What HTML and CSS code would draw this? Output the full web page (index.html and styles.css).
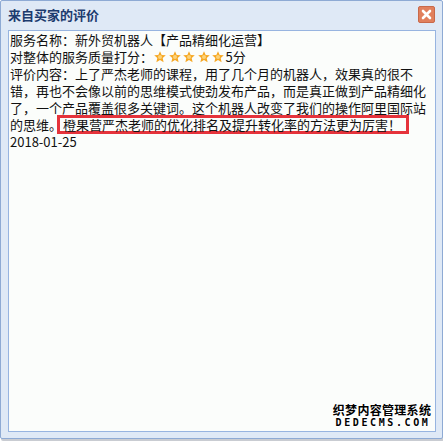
FILE: index.html
```html
<!DOCTYPE html>
<html lang="zh">
<head>
<meta charset="utf-8">
<title>来自买家的评价</title>
<link rel="stylesheet" href="styles.css">
</head>
<body>
<div class="window">
  <div class="titlebar">
    <span class="title">来自买家的评价</span>
    <span class="close">
      <svg width="17" height="17" viewBox="0 0 17 17"><rect x="0.5" y="0.5" width="16" height="16" rx="1.5" fill="#e1805d" stroke="#c8694a"/><path d="M5 5 L12 12 M12 5 L5 12" stroke="#fff" stroke-width="2.6" stroke-linecap="round"/></svg>
    </span>
  </div>
  <div class="panel">
    <div class="line">服务名称：新外贸机器人【产品精细化运营】</div>
    <div class="line">对整体的服务质量打分：<span class="stars"><svg class="star" viewBox="0 0 14 14"><path d="M7 1.2 L8.7 5 L12.8 5.3 L9.7 8 L10.6 12.2 L7 10 L3.4 12.2 L4.3 8 L1.2 5.3 L5.3 5 Z" fill="#f6a825"/><circle cx="7" cy="7" r="2" fill="#fbd27a"/></svg><svg class="star" viewBox="0 0 14 14"><path d="M7 1.2 L8.7 5 L12.8 5.3 L9.7 8 L10.6 12.2 L7 10 L3.4 12.2 L4.3 8 L1.2 5.3 L5.3 5 Z" fill="#f6a825"/><circle cx="7" cy="7" r="2" fill="#fbd27a"/></svg><svg class="star" viewBox="0 0 14 14"><path d="M7 1.2 L8.7 5 L12.8 5.3 L9.7 8 L10.6 12.2 L7 10 L3.4 12.2 L4.3 8 L1.2 5.3 L5.3 5 Z" fill="#f6a825"/><circle cx="7" cy="7" r="2" fill="#fbd27a"/></svg><svg class="star" viewBox="0 0 14 14"><path d="M7 1.2 L8.7 5 L12.8 5.3 L9.7 8 L10.6 12.2 L7 10 L3.4 12.2 L4.3 8 L1.2 5.3 L5.3 5 Z" fill="#f6a825"/><circle cx="7" cy="7" r="2" fill="#fbd27a"/></svg><svg class="star" viewBox="0 0 14 14"><path d="M7 1.2 L8.7 5 L12.8 5.3 L9.7 8 L10.6 12.2 L7 10 L3.4 12.2 L4.3 8 L1.2 5.3 L5.3 5 Z" fill="#f6a825"/><circle cx="7" cy="7" r="2" fill="#fbd27a"/></svg></span>5分</div>
    <div class="line">评价内容：上了严杰老师的课程，用了几个月的机器人，效果真的很不</div>
    <div class="line">错，再也不会像以前的思维模式使劲发布产品，而是真正做到产品精细化</div>
    <div class="line">了，一个产品覆盖很多关键词。这个机器人改变了我们的操作阿里国际站</div>
    <div class="line">的思维。<span class="mark">橙果营严杰老师的优化排名及提升转化率的方法更为厉害！</span></div>
    <div class="line">2018-01-25</div>
  </div>
  <div class="watermark">
    <div class="wm-cn">织梦内容管理系统</div>
    <div class="wm-en">DEDECMS.COM</div>
  </div>
</div>
</body>
</html>
```
FILE: styles.css
```css
html, body {
  margin: 0;
  padding: 0;
  background: #ffffff;
}
body {
  width: 443px;
  height: 441px;
  overflow: hidden;
  font-family: "Noto Sans CJK SC", "Noto Sans", sans-serif;
}
.window {
  position: relative;
  box-sizing: border-box;
  width: 443px;
  height: 439px;
  border: 1px solid #8eaad4;
  border-radius: 2px;
  background: #dfe9f6;
  padding: 0 6px 6px 7px;
  display: flex;
  flex-direction: column;
  box-shadow: 1px 2px 0 #c9ccd2;
}
.titlebar {
  height: 29px;
  display: flex;
  align-items: center;
  justify-content: space-between;
}
.title {
  font-size: 13px;
  font-weight: bold;
  color: #1c3b6e;
  line-height: 17px;
  margin-top: -2px;
}
.close {
  display: flex;
  width: 17px;
  height: 17px;
  margin-right: 1px;
  margin-top: -3px;
}
.panel {
  flex: 1;
  border: 1px solid #97b4e0;
  background: #fbfdfb;
  padding: 0 0 0 1px;
  font-size: 13px;
  line-height: 17px;
  color: #111111;
}
.line {
  white-space: nowrap;
  height: 17px;
}
.stars {
  display: inline-flex;
  vertical-align: top;
  height: 17px;
  align-items: center;
}
.star {
  width: 14px;
  height: 14px;
  margin-right: 0.5px;
}
.mark {
  display: inline-block;
  border: 3px solid #e5333b;
  padding: 0 5px 0 3px;
  margin-left: -5px;
  margin-top: -1px;
  line-height: 13px;
  height: 13px;
  vertical-align: top;
}
.watermark {
  position: absolute;
  right: 10px;
  bottom: 9px;
  width: 100px;
  text-align: center;
  color: #000;
  font-weight: bold;
  text-shadow: 1px 0 0 #fff, -1px 0 0 #fff, 0 1px 0 #fff, 0 -1px 0 #fff;
}
.wm-cn {
  font-size: 12px;
  line-height: 14px;
  letter-spacing: 0.3px;
}
.wm-en {
  font-family: "DejaVu Sans Mono", monospace;
  font-size: 10px;
  line-height: 12px;
  letter-spacing: 2.6px;
  margin-right: -2px;
}
```
